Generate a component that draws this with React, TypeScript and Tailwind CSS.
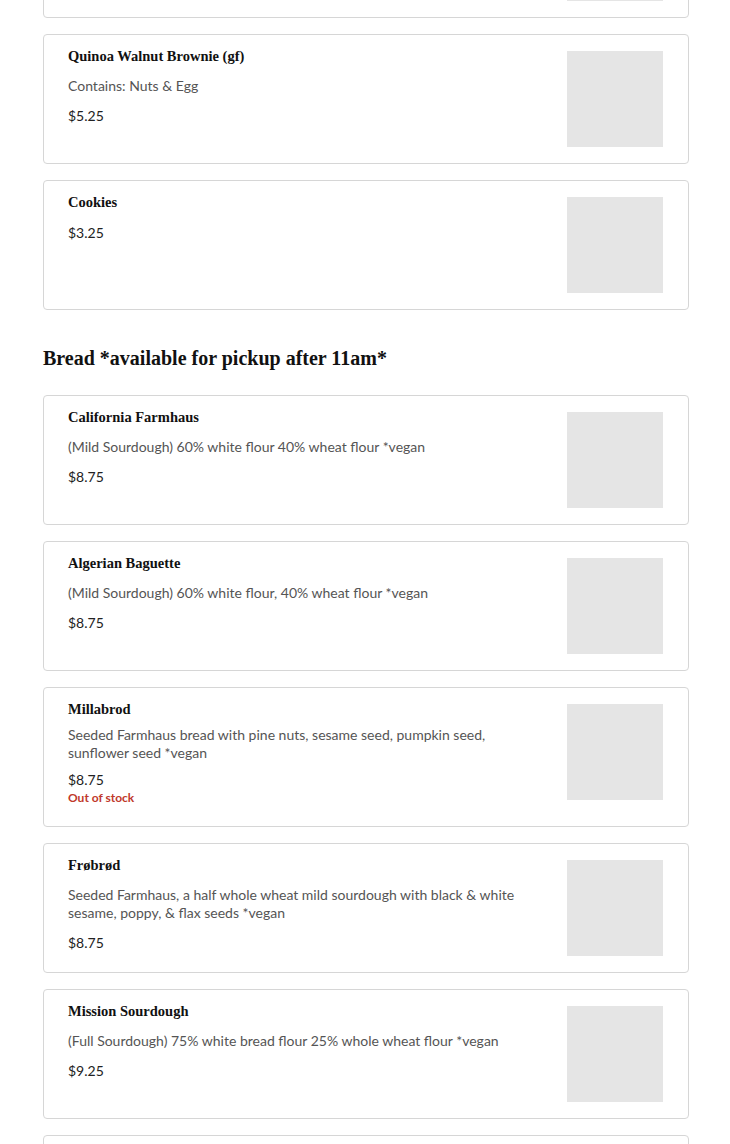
import React from 'react';

type Item = {
  name: string;
  desc?: string;
  price: string;
  outOfStock?: boolean;
};

const sweets: Item[] = [
  { name: 'Chocolate Chip Cookie', desc: 'Contains: Egg', price: '$3.75' },
  { name: 'Quinoa Walnut Brownie (gf)', desc: 'Contains: Nuts & Egg', price: '$5.25' },
  { name: 'Cookies', price: '$3.25' },
];

const bread: Item[] = [
  { name: 'California Farmhaus', desc: '(Mild Sourdough) 60% white flour 40% wheat flour *vegan', price: '$8.75' },
  { name: 'Algerian Baguette', desc: '(Mild Sourdough) 60% white flour, 40% wheat flour *vegan', price: '$8.75' },
  {
    name: 'Millabrod',
    desc: 'Seeded Farmhaus bread with pine nuts, sesame seed, pumpkin seed, sunflower seed *vegan',
    price: '$8.75',
    outOfStock: true,
  },
  {
    name: 'Frøbrød',
    desc: 'Seeded Farmhaus, a half whole wheat mild sourdough with black & white sesame, poppy, & flax seeds *vegan',
    price: '$8.75',
  },
  { name: 'Mission Sourdough', desc: '(Full Sourdough) 75% white bread flour 25% whole wheat flour *vegan', price: '$9.25' },
  { name: 'Country Loaf', desc: '(Full Sourdough) white and whole wheat flour *vegan', price: '$9.25' },
];

const serif = "font-['Liberation_Serif',serif]";

const MenuCard: React.FC<{ item: Item }> = ({ item }) => {
  const tight = item.outOfStock;
  return (
    <div className="flex rounded-[4px] border border-[#d6d6d6] bg-white pl-[24px] pr-[25px]">
      <div className="flex flex-1 flex-col pt-[11px] pb-[20px] pr-6">
        <h3 className={`${serif} text-[14.5px] font-bold leading-[20px] text-[#111]`}>{item.name}</h3>
        {item.desc && (
          <p className={`text-[14px] leading-[18px] text-[#555] ${tight ? 'mt-[7px]' : 'mt-[11px]'}`}>
            {item.desc}
          </p>
        )}
        <p className={`text-[14px] leading-[18px] text-[#222] ${tight ? 'mt-[9px]' : 'mt-[12px]'}`}>{item.price}</p>
        {item.outOfStock && (
          <p className="mt-[1px] text-[12px] font-bold leading-[16px] text-[#c0392b]">Out of stock</p>
        )}
      </div>
      <div className="my-[16px] h-[96px] w-[96px] shrink-0 bg-[#e5e5e5]" />
    </div>
  );
};

export default function App() {
  return (
    <div className="min-h-screen bg-white font-['Lato',sans-serif]">
      <div className="ml-[43px] mr-[41px] mt-[-112px] flex flex-col">
        <div className="flex flex-col gap-[16px]">
          {sweets.map((it) => (
            <MenuCard key={it.name} item={it} />
          ))}
        </div>
        <h2 className={`${serif} mt-[36px] mb-[25px] text-[20px] font-bold leading-[24px] text-[#111]`}>
          Bread *available for pickup after 11am*
        </h2>
        <div className="flex flex-col gap-[16px]">
          {bread.map((it) => (
            <MenuCard key={it.name} item={it} />
          ))}
        </div>
      </div>
    </div>
  );
}
